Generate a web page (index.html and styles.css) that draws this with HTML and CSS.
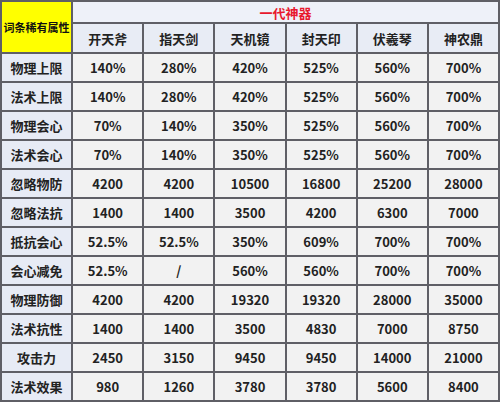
FILE: index.html
```html
<!DOCTYPE html>
<html lang="zh">
<head>
<meta charset="utf-8">
<title>一代神器</title>
<link rel="stylesheet" href="styles.css">
</head>
<body>
<table class="tbl">
  <colgroup>
    <col><col><col><col><col><col><col>
  </colgroup>
  <thead>
    <tr class="h1">
      <th class="corner" rowspan="2">词条稀有属性</th>
      <th class="group" colspan="6">一代神器</th>
    </tr>
    <tr class="h2">
      <th>开天斧</th><th>指天剑</th><th>天机镜</th><th>封天印</th><th>伏羲琴</th><th>神农鼎</th>
    </tr>
  </thead>
  <tbody>
    <tr><th>物理上限</th><td>140%</td><td>280%</td><td>420%</td><td>525%</td><td>560%</td><td>700%</td></tr>
    <tr><th>法术上限</th><td>140%</td><td>280%</td><td>420%</td><td>525%</td><td>560%</td><td>700%</td></tr>
    <tr><th>物理会心</th><td>70%</td><td>140%</td><td>350%</td><td>525%</td><td>560%</td><td>700%</td></tr>
    <tr><th>法术会心</th><td>70%</td><td>140%</td><td>350%</td><td>525%</td><td>560%</td><td>700%</td></tr>
    <tr><th>忽略物防</th><td>4200</td><td>4200</td><td>10500</td><td>16800</td><td>25200</td><td>28000</td></tr>
    <tr><th>忽略法抗</th><td>1400</td><td>1400</td><td>3500</td><td>4200</td><td>6300</td><td>7000</td></tr>
    <tr><th>抵抗会心</th><td>52.5%</td><td>52.5%</td><td>350%</td><td>609%</td><td>700%</td><td>700%</td></tr>
    <tr><th>会心减免</th><td>52.5%</td><td>/</td><td>560%</td><td>560%</td><td>700%</td><td>700%</td></tr>
    <tr><th>物理防御</th><td>4200</td><td>4200</td><td>19320</td><td>19320</td><td>28000</td><td>35000</td></tr>
    <tr><th>法术抗性</th><td>1400</td><td>1400</td><td>3500</td><td>4830</td><td>7000</td><td>8750</td></tr>
    <tr><th>攻击力</th><td>2450</td><td>3150</td><td>9450</td><td>9450</td><td>14000</td><td>21000</td></tr>
    <tr><th>法术效果</th><td>980</td><td>1260</td><td>3780</td><td>3780</td><td>5600</td><td>8400</td></tr>
  </tbody>
</table>
</body>
</html>
```

FILE: styles.css
```css
html, body {
  margin: 0;
  padding: 0;
  background: #ffffff;
}

.tbl {
  width: 500px;
  table-layout: fixed;
  border-collapse: collapse;
  font-family: "Noto Sans CJK SC", "Noto Sans", sans-serif;
  font-size: 13px;
  font-weight: 700;
  color: #222222;
}

.tbl th,
.tbl td {
  border: 2px solid #5f5f66;
  padding: 0;
  text-align: center;
  vertical-align: middle;
  line-height: 1;
  white-space: nowrap;
  overflow: hidden;
}

.tbl td {
  background: #f2f2f2;
  height: 27px;
}

.tbl tbody th {
  background: #e7ebf5;
  font-weight: 700;
  height: 27px;
}

.h1 th {
  height: 20px;
}

.h2 th {
  background: #e8ecf5;
  height: 28px;
}

.corner {
  background: #ffff00;
  font-size: 11px;
  color: #111111;
}

.group {
  background: #eef1f9;
  color: #e8182e;
  text-align: center;
}
```
